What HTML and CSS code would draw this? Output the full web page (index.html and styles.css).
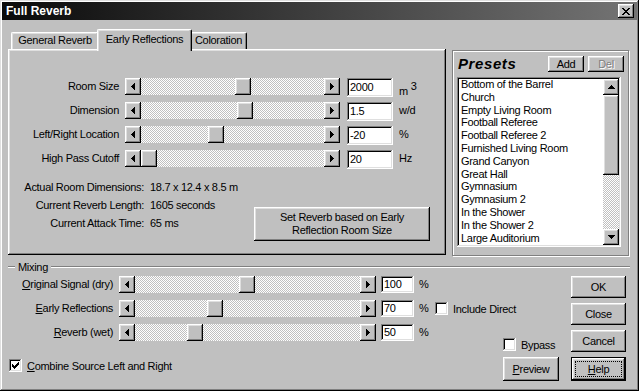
FILE: index.html
```html
<!DOCTYPE html>
<html>
<head>
    <title>Full Reverb</title>
    <link rel="stylesheet" href="styles.css">
</head>
<body>
    <!-- pixel glyphs used by the scroll buttons and check boxes -->
    <svg class="defs" width="0" height="0">
        <symbol id="arr-left" viewBox="0 0 4 7"><path d="M0 3h1v1H0z M1 2h1v3H1z M2 1h1v5H2z M3 0h1v7H3z"/></symbol>
        <symbol id="arr-right" viewBox="0 0 4 7"><path d="M3 3h1v1H3z M2 2h1v3H2z M1 1h1v5H1z M0 0h1v7H0z"/></symbol>
        <symbol id="arr-up" viewBox="0 0 7 4"><path d="M3 0h1v1H3z M2 1h3v1H2z M1 2h5v1H1z M0 3h7v1H0z"/></symbol>
        <symbol id="arr-down" viewBox="0 0 7 4"><path d="M0 0h7v1H0z M1 1h5v1H1z M2 2h3v1H2z M3 3h1v1H3z"/></symbol>
        <symbol id="tick" viewBox="0 0 7 7"><path d="M6 0h1v1H6z M5 1h2v1H5z M0 2h1v1H0z M4 2h3v1H4z M0 3h2v1H0z M3 3h3v1H3z M0 4h5v1H0z M1 5h3v1H1z M2 6h1v1H2z"/></symbol>
    </svg>

    <div class="window">
        <div class="titlebar">
            <span class="title">Full Reverb</span>
            <span class="close-btn">
                <svg class="close-x" viewBox="0 0 8 7"><path d="M0 0h2v1H0z M6 0h2v1H6z M1 1h2v1H1z M5 1h2v1H5z M2 2h4v1H2z M3 3h2v1H3z M2 4h4v1H2z M1 5h2v1H1z M5 5h2v1H5z M0 6h2v1H0z M6 6h2v1H6z"/></svg>
            </span>
        </div>

        <div class="content">
            <div class="top">
                <div class="tabs">
                    <div class="tab-strip">
                        <div class="tab tab-general">General Reverb</div>
                        <div class="tab tab-active">Early Reflections</div>
                        <div class="tab tab-color">Coloration</div>
                    </div>
                    <div class="tab-panel">
                        <div class="sliders">
                            <span class="row-label">Room Size</span>
                            <div class="scrollbar">
                                <span class="sb-btn"><svg class="arrow-h"><use href="#arr-left"/></svg></span>
                                <span class="sb-track"><span class="sb-thumb" style="left: 94px"></span></span>
                                <span class="sb-btn"><svg class="arrow-h"><use href="#arr-right"/></svg></span>
                            </div>
                            <div class="field">2000</div>
                            <span class="unit">m <span class="sup">3</span></span>

                            <span class="row-label">Dimension</span>
                            <div class="scrollbar">
                                <span class="sb-btn"><svg class="arrow-h"><use href="#arr-left"/></svg></span>
                                <span class="sb-track"><span class="sb-thumb" style="left: 96px"></span></span>
                                <span class="sb-btn"><svg class="arrow-h"><use href="#arr-right"/></svg></span>
                            </div>
                            <div class="field">1.5</div>
                            <span class="unit">w/d</span>

                            <span class="row-label">Left/Right Location</span>
                            <div class="scrollbar">
                                <span class="sb-btn"><svg class="arrow-h"><use href="#arr-left"/></svg></span>
                                <span class="sb-track"><span class="sb-thumb" style="left: 67px"></span></span>
                                <span class="sb-btn"><svg class="arrow-h"><use href="#arr-right"/></svg></span>
                            </div>
                            <div class="field">-20</div>
                            <span class="unit">%</span>

                            <span class="row-label">High Pass Cutoff</span>
                            <div class="scrollbar">
                                <span class="sb-btn"><svg class="arrow-h"><use href="#arr-left"/></svg></span>
                                <span class="sb-track"><span class="sb-thumb" style="left: 0px"></span></span>
                                <span class="sb-btn"><svg class="arrow-h"><use href="#arr-right"/></svg></span>
                            </div>
                            <div class="field">20</div>
                            <span class="unit">Hz</span>
                        </div>

                        <div class="info">
                            <div class="info-grid">
                                <span class="info-label">Actual Room Dimensions:</span><span>18.7 x 12.4 x 8.5 m</span>
                                <span class="info-label">Current Reverb Length:</span><span>1605 seconds</span>
                                <span class="info-label">Current Attack Time:</span><span>65 ms</span>
                            </div>
                            <div class="btn set-reverb">Set Reverb based on Early<br>Reflection Room Size</div>
                        </div>
                    </div>
                </div>

                <div class="presets">
                    <div class="presets-head">
                        <span class="presets-title">Presets</span>
                        <span class="btn small-btn">Add</span>
                        <span class="btn small-btn disabled">Del</span>
                    </div>
                    <div class="listbox">
                        <ul class="preset-list">
                            <li>Bottom of the Barrel</li>
                            <li>Church</li>
                            <li>Empty Living Room</li>
                            <li>Football Referee</li>
                            <li>Football Referee 2</li>
                            <li>Furnished Living Room</li>
                            <li>Grand Canyon</li>
                            <li>Great Hall</li>
                            <li>Gymnasium</li>
                            <li>Gymnasium 2</li>
                            <li>In the Shower</li>
                            <li>In the Shower 2</li>
                            <li>Large Auditorium</li>
                        </ul>
                        <div class="vscroll">
                            <span class="sb-btn vs-btn"><svg class="arrow-v"><use href="#arr-up"/></svg></span>
                            <span class="vs-thumb"></span>
                            <span class="vs-track"></span>
                            <span class="sb-btn vs-btn"><svg class="arrow-v"><use href="#arr-down"/></svg></span>
                        </div>
                    </div>
                </div>
            </div>

            <div class="mixing-head">
                <span class="etch etch-short"></span>
                <span class="mixing-title">Mixing</span>
                <span class="etch etch-long"></span>
            </div>

            <div class="mixing">
                <div class="dialog-buttons">
                    <span class="btn dlg-btn">OK</span>
                    <span class="btn dlg-btn">Close</span>
                    <span class="btn dlg-btn">Cancel</span>
                    <span class="btn dlg-btn default"><span class="focus"><u>H</u>elp</span></span>
                </div>

                <span class="mix-label"><u>O</u>riginal Signal (dry)</span>
                <div class="scrollbar">
                    <span class="sb-btn"><svg class="arrow-h"><use href="#arr-left"/></svg></span>
                    <span class="sb-track"><span class="sb-thumb" style="left: 104px"></span></span>
                    <span class="sb-btn"><svg class="arrow-h"><use href="#arr-right"/></svg></span>
                </div>
                <div class="field">100</div>
                <span class="unit">%</span>

                <span class="mix-label"><u>E</u>arly Reflections</span>
                <div class="scrollbar">
                    <span class="sb-btn"><svg class="arrow-h"><use href="#arr-left"/></svg></span>
                    <span class="sb-track"><span class="sb-thumb" style="left: 72px"></span></span>
                    <span class="sb-btn"><svg class="arrow-h"><use href="#arr-right"/></svg></span>
                </div>
                <div class="field">70</div>
                <span class="unit">%</span>
                <label class="check include-direct"><span class="box"></span>Include Direct</label>

                <span class="mix-label"><u>R</u>everb (wet)</span>
                <div class="scrollbar">
                    <span class="sb-btn"><svg class="arrow-h"><use href="#arr-left"/></svg></span>
                    <span class="sb-track"><span class="sb-thumb" style="left: 52px"></span></span>
                    <span class="sb-btn"><svg class="arrow-h"><use href="#arr-right"/></svg></span>
                </div>
                <div class="field">50</div>
                <span class="unit">%</span>

                <label class="check combine"><span class="box"><svg class="tick"><use href="#tick"/></svg></span><span><u>C</u>ombine Source Left and Right</span></label>

                <div class="bypass-group">
                    <label class="check bypass"><span class="box"></span>Bypass</label>
                    <span class="btn preview-btn"><span><u>P</u>review</span></span>
                </div>
            </div>
        </div>
    </div>
</body>
</html>
```

FILE: styles.css
```css
* {
    box-sizing: border-box;
}

body {
    margin: 0;
    font-family: 'Liberation Sans', Arial, sans-serif;
    font-size: 11px;
    letter-spacing: -0.3px;
    color: #000;
    background-color: #c0c0c0;
}

.defs {
    position: absolute;
    width: 0;
    height: 0;
}

/* raised and sunken 3d edges */
.btn,
.sb-btn,
.sb-thumb,
.vs-thumb,
.close-btn {
    background-color: #c0c0c0;
    box-shadow: inset -1px -1px #000, inset 1px 1px #fff, inset -2px -2px #808080, inset 2px 2px #dfdfdf;
}

.field,
.box,
.listbox {
    background-color: #fff;
    box-shadow: inset -1px -1px #fff, inset 1px 1px #808080, inset -2px -2px #dfdfdf, inset 2px 2px #000;
}

.window {
    width: 639px;
    height: 391px;
    padding: 2px;
    background-color: #c0c0c0;
    box-shadow: inset -1px -1px #000, inset 1px 1px #dfdfdf, inset -2px -2px #808080, inset 2px 2px #fff;
}

.titlebar {
    height: 18px;
    display: flex;
    align-items: center;
    justify-content: space-between;
    padding: 0 3px 0 4px;
    background: linear-gradient(to right, #0a0a0a, #747474);
    color: #fff;
}

.title {
    font-weight: bold;
    font-size: 12px;
    letter-spacing: 0;
}

.close-btn {
    width: 16px;
    height: 14px;
    display: flex;
    align-items: center;
    justify-content: center;
}

.close-x {
    width: 8px;
    height: 7px;
    fill: #000;
}

.content {
    padding: 9px 0 0 6px;
}

.top {
    display: flex;
    align-items: flex-start;
}

/* tab control */
.tabs {
    width: 438px;
}

.tab-strip {
    height: 20px;
    display: flex;
    align-items: flex-end;
    padding-left: 3px;
}

.tab {
    height: 17px;
    line-height: 15px;
    text-align: center;
    background-color: #c0c0c0;
    border-top: 1px solid #fff;
    border-left: 1px solid #fff;
    border-right: 1px solid #000;
    border-radius: 2px 2px 0 0;
    box-shadow: inset -1px 0 #808080, inset 1px 1px #dfdfdf;
}

.tab-general {
    width: 88px;
}

.tab-active {
    width: 95px;
    height: 22px;
    line-height: 18px;
    margin: 0 -2px -2px;
    position: relative;
    z-index: 1;
}

.tab-color {
    width: 57px;
}

.tab-panel {
    height: 206px;
    padding: 29px 0 0 2px;
    box-shadow: inset -1px -1px #000, inset 1px 1px #fff, inset -2px -2px #808080, inset 2px 2px #dfdfdf;
}

.sliders {
    display: grid;
    grid-template-columns: 109px 215px 47px auto;
    grid-auto-rows: 19px;
    column-gap: 6px;
    row-gap: 5px;
}

.row-label {
    text-align: right;
    line-height: 17px;
    white-space: nowrap;
}

.sliders .field {
    margin-left: 1px;
    line-height: 19px;
}

.unit {
    line-height: 17px;
    white-space: nowrap;
}

.sup {
    vertical-align: 5px;
}

.field {
    padding: 0 3px;
    line-height: 17px;
}

/* scroll bars */
.scrollbar {
    display: flex;
    height: 17px;
}

.sb-btn {
    width: 16px;
    flex: none;
    display: flex;
    align-items: center;
    justify-content: center;
}

.arrow-h {
    width: 4px;
    height: 7px;
    fill: #000;
}

.arrow-v {
    width: 7px;
    height: 4px;
    fill: #000;
}

.sb-track,
.vs-track {
    flex: 1;
    position: relative;
    background: repeating-conic-gradient(#c0c0c0 0 25%, #fff 0 50%) 0 0 / 2px 2px;
}

.sb-thumb {
    position: absolute;
    top: 0;
    width: 16px;
    height: 100%;
}

.info {
    display: flex;
    align-items: flex-start;
    margin-top: 9px;
}

.info-grid {
    display: grid;
    grid-template-columns: 134px auto;
    grid-auto-rows: 18px;
    column-gap: 6px;
    line-height: 18px;
    white-space: nowrap;
}

.info-label {
    text-align: right;
}

.set-reverb {
    width: 176px;
    height: 34px;
    margin: 29px 16px 0 auto;
    display: flex;
    align-items: center;
    justify-content: center;
    text-align: center;
    line-height: 13px;
}

/* presets group */
.presets {
    width: 177px;
    height: 206px;
    margin: 21px 0 0 6px;
    padding: 5px 4px 0 4px;
    border: 1px solid #808080;
    box-shadow: 1px 1px #fff, inset 1px 1px #fff;
}

.presets-head {
    display: flex;
    align-items: center;
    gap: 4px;
    height: 16px;
}

.presets-title {
    margin: 0 auto 0 1px;
    font-size: 15px;
    font-weight: bold;
    font-style: italic;
    letter-spacing: 0.6px;
    line-height: 16px;
}

.small-btn {
    width: 36px;
    height: 16px;
    line-height: 16px;
    text-align: center;
}

.disabled {
    color: #808080;
    text-shadow: 1px 1px #fff;
}

.listbox {
    display: flex;
    width: 164px;
    height: 170px;
    margin-top: 5px;
    padding: 2px;
}

.preset-list {
    flex: 1;
    margin: -1px 0 0;
    padding: 0 0 0 2px;
    list-style: none;
    line-height: 12.8px;
    overflow: hidden;
    white-space: nowrap;
}

.vscroll {
    width: 16px;
    display: flex;
    flex-direction: column;
}

.vs-btn {
    height: 16px;
}

.vs-thumb {
    height: 80px;
    flex: none;
}

/* mixing section */
.mixing-head {
    display: flex;
    align-items: center;
    height: 14px;
    margin: 4px 7px 0 0;
}

.etch {
    height: 2px;
    border-top: 1px solid #808080;
    border-bottom: 1px solid #fff;
}

.etch-short {
    width: 7px;
}

.etch-long {
    flex: 1;
}

.mixing-title {
    padding: 0 3px;
}

.mixing {
    display: grid;
    grid-template-columns: 106px 257px 33px 11px 124px 62px;
    grid-template-rows: 17px 17px 17px 33px;
    column-gap: 5px;
    row-gap: 7px;
    margin-top: 2px;
}

.mix-label {
    grid-column: 1;
    text-align: right;
    padding-right: 1px;
    line-height: 17px;
    white-space: nowrap;
}

.check {
    display: flex;
    align-items: center;
    gap: 5px;
    white-space: nowrap;
}

.box {
    width: 13px;
    height: 13px;
    flex: none;
    display: flex;
    align-items: center;
    justify-content: center;
}

.tick {
    width: 7px;
    height: 7px;
    fill: #000;
}

.include-direct {
    grid-column: 5;
}

.combine {
    grid-column: 1 / 5;
    grid-row: 4;
    margin: 2px 0 0 1px;
}

.bypass-group {
    grid-column: 5;
    grid-row: 3 / 5;
    justify-self: end;
    align-self: end;
    width: 56px;
    display: flex;
    flex-direction: column;
    align-items: flex-start;
    gap: 6px;
}

.preview-btn {
    width: 56px;
    height: 24px;
    display: flex;
    align-items: center;
    justify-content: center;
}

.dialog-buttons {
    grid-column: 6;
    grid-row: 1 / 5;
    display: flex;
    flex-direction: column;
    align-items: flex-end;
    gap: 5px;
}

.dlg-btn {
    width: 55px;
    height: 22px;
    display: flex;
    align-items: center;
    justify-content: center;
}

.dlg-btn.default {
    height: 24px;
    padding: 3px;
    border: 1px solid #000;
}

.focus {
    flex: 1;
    align-self: stretch;
    display: flex;
    align-items: center;
    justify-content: center;
    border: 1px dotted #000;
}
```
